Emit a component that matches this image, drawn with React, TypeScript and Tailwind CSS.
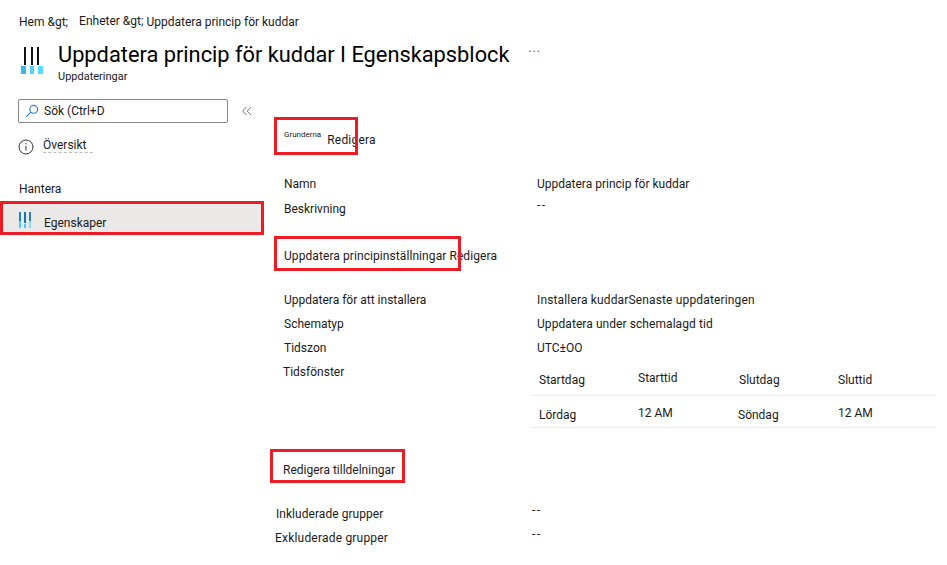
import React from "react";

const RED = "absolute border-[3px] border-[#ed1c24] pointer-events-none";

function TitleIcon() {
  return (
    <svg width="24" height="28" viewBox="0 0 24 28" className="shrink-0">
      <rect x="3" y="0" width="2" height="18" fill="#111" />
      <rect x="10" y="0" width="2" height="18" fill="#111" />
      <rect x="16" y="0" width="2" height="18" fill="#111" />
      <rect x="0" y="19" width="5" height="8" fill="#36b8ea" />
      <rect x="9" y="19" width="4" height="8" fill="#50d4fa" />
      <rect x="17" y="19" width="5" height="8" fill="#55dcff" />
    </svg>
  );
}

function SideIcon() {
  return (
    <svg width="13" height="16" viewBox="0 0 13 16">
      <rect x="0" y="0" width="2" height="9" fill="#2a7fc0" />
      <rect x="5" y="0" width="2" height="11" fill="#1f6fb8" />
      <rect x="10" y="0" width="2" height="9" fill="#2a7fc0" />
      <rect x="0" y="9" width="2" height="7" fill="#50c8f4" />
      <rect x="5" y="12" width="2" height="4" fill="#50c8f4" />
      <rect x="10" y="9" width="2" height="7" fill="#7fdcf8" />
    </svg>
  );
}

function Row({ label, value, dash = false, className = "", valueClass = "", labelClass = "" }: { label: string; value: string; dash?: boolean; className?: string; valueClass?: string; labelClass?: string }) {
  return (
    <div className={"grid grid-cols-[253px_1fr] h-6 items-center " + className}>
      <span className={labelClass}>{label}</span>
      <span className={(dash ? "-mt-[8px] tracking-[1.5px] " : "") + valueClass}>{value}</span>
    </div>
  );
}

export default function App() {
  return (
    <div className="relative w-[947px] h-[565px] overflow-hidden bg-white text-[12px] leading-4 text-[#1b1a19] font-['Roboto','Open_Sans',sans-serif]">
      <header className="pl-[19px] pt-[14px]">
        <nav className="flex h-4 items-center">
          <span>Hem &amp;gt;</span>
          <span className="ml-[11px] -mt-[2px]">Enheter &amp;gt;</span>
          <span className="ml-[3px]">Uppdatera princip för kuddar</span>
        </nav>
        <div className="flex mt-[12px]">
          <div className="ml-[2px] mt-[5px] w-[37px]"><TitleIcon /></div>
          <div>
            <div className="flex items-start">
              <h1 className="text-[21.8px] leading-[26px] text-black">Uppdatera princip för kuddar I Egenskapsblock</h1>
              <span className="ml-[19px] -mt-[2px] text-[#555] tracking-[1px]">...</span>
            </div>
            <div className="text-[11px] leading-[14px] mt-[2px]">Uppdateringar</div>
          </div>
        </div>
      </header>

      <div className="flex">
        <aside className="w-[263px] shrink-0 mt-[15px]">
          <div className="flex items-center">
            <div className="ml-[18px] w-[210px] h-6 border border-[#8a8886] rounded-[2px] flex items-center pl-[6px]">
              <svg width="14" height="14" viewBox="0 0 14 14" fill="none" stroke="#2b7cd3" strokeWidth="1.1">
                <circle cx="8.7" cy="5.3" r="3.9" />
                <path d="M5.8 8.2 L1.2 12.8" />
              </svg>
              <span className="ml-[5px] -mt-[1px]">Sök (Ctrl+D</span>
            </div>
            <svg width="10" height="10" viewBox="0 0 10 10" fill="none" stroke="#777" className="ml-[14px]">
              <path d="M4.5 1 L0.7 5 L4.5 9 M9 1 L5.2 5 L9 9" />
            </svg>
          </div>
          <div className="flex items-center mt-[11px] ml-[18px] h-6">
            <svg width="16" height="16" viewBox="0 0 16 16" fill="none" stroke="#333" className="mt-[2px]">
              <circle cx="8" cy="8" r="7" />
              <path d="M8 7v4.5M8 4.2v1.2" />
            </svg>
            <div className="ml-[9px] flex flex-col -mt-[3px]">
              <span>Översikt</span>
              <span className="block w-[50px] border-t border-dashed border-[#bbb] -mb-px mt-[-1px]" />
            </div>
          </div>
          <div className="ml-[19px] mt-[23px] h-4 flex items-center">Hantera</div>
          <div className="mt-[7px] h-[28px] bg-[#ebe9e8] flex pl-[19px] pt-[8px]">
            <SideIcon />
            <span className="ml-[12px] mt-[3px]">Egenskaper</span>
          </div>
        </aside>

        <main className="flex-1 relative">
          <div className="ml-[21px] mt-[45px] h-5 flex items-start">
            <span className="text-[8px] leading-3">Grunderna</span>
            <span className="ml-[6px] mt-[3px] tracking-[0.2px]">Redigera</span>
          </div>
          <div className="ml-[21px] mt-[22px]">
            <Row label="Namn" value="Uppdatera princip för kuddar" className="!h-[25px]" />
            <Row label="Beskrivning" value="--" dash className="!h-[25px]" />
          </div>
          <div className="ml-[21px] mt-[27px] h-4 flex items-center tracking-[0.08px]">Uppdatera principinställningar Redigera</div>
          <div className="ml-[21px] mt-[24px]">
            <Row label="Uppdatera för att installera" value="Installera kuddarSenaste uppdateringen" valueClass="tracking-[0.15px]" />
            <Row label="Schematyp" value="Uppdatera under schemalagd tid" valueClass="tracking-[0.07px]" />
            <Row label="Tidszon" value="UTC±OO" />
          </div>
          <div className="ml-[20px] flex">
            <div className="w-[248px] h-6 flex items-center">Tidsfönster</div>
            <div className="w-[405px]">
              <div className="grid grid-cols-[99px_101px_99px_1fr] pl-[8px] h-[36px] pt-[12px] border-b border-[#edebe9]">
                <span>Startdag</span>
                <span className="-mt-[2px]">Starttid</span>
                <span>Slutdag</span>
                <span>Sluttid</span>
              </div>
              <div className="grid grid-cols-[99px_101px_99px_1fr] pl-[8px] h-[32px] pt-[11px] border-b border-[#edebe9]">
                <span>Lördag</span>
                <span className="-mt-[2px]">12 AM</span>
                <span className="-ml-px">Söndag</span>
                <span className="-mt-[2px]">12 AM</span>
              </div>
            </div>
          </div>
          <div className="ml-[20px] mt-[34px] h-4 flex items-center">Redigera tilldelningar</div>
          <div className="ml-[12px] mt-[24px]">
            <Row label="Inkluderade grupper" value="--" dash className="!grid-cols-[257px_1fr]" labelClass="ml-px tracking-[0.05px]" />
            <Row label="Exkluderade grupper" value="--" dash className="!grid-cols-[257px_1fr]" labelClass="tracking-[0.2px]" />
          </div>
        </main>
      </div>

      <div className={RED + " left-0 top-[201px] w-[264px] h-[34px]"} />
      <div className={RED + " left-[274px] top-[117px] w-[84px] h-[38px]"} />
      <div className={RED + " left-[274px] top-[236px] w-[187px] h-[35px]"} />
      <div className={RED + " left-[270px] top-[449px] w-[135px] h-[34px]"} />
    </div>
  );
}
